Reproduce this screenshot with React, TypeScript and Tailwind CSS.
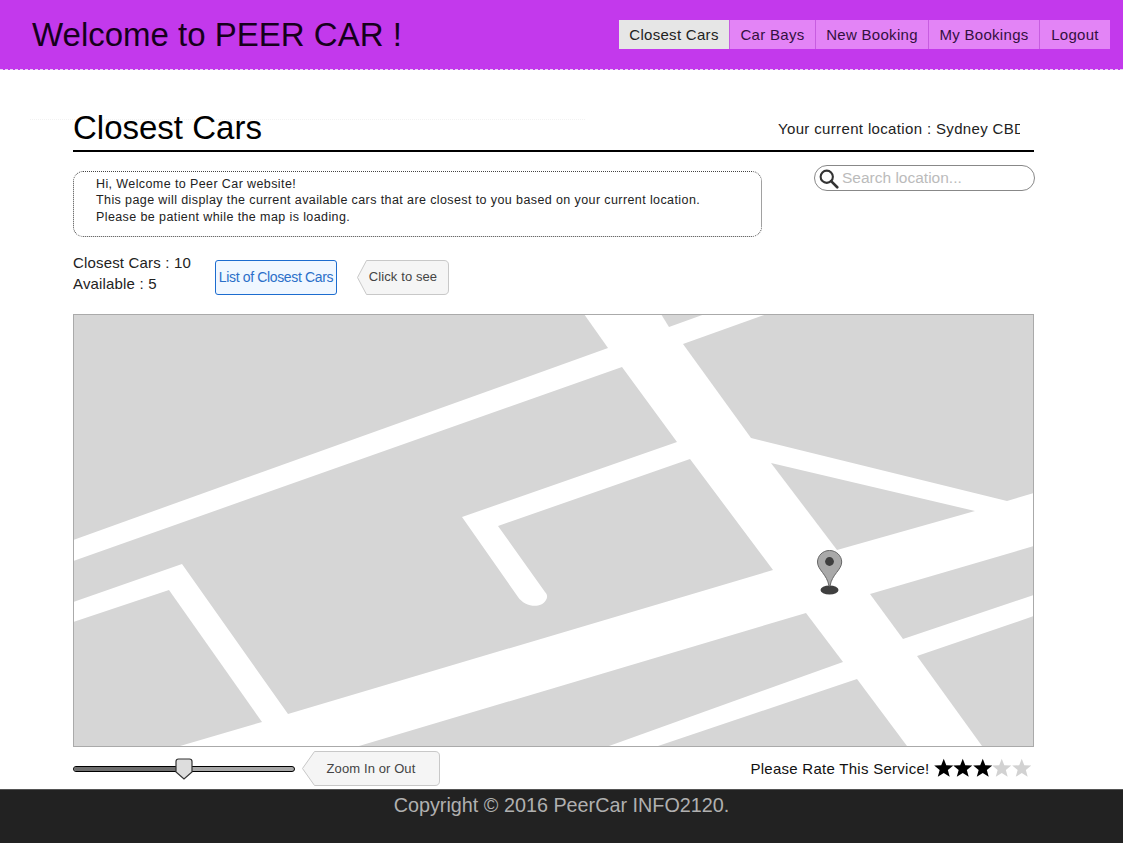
import React from "react";

const blocks = [
  "73,314 584,314 608,348 73,540",
  "661,314 705,314 669,327",
  "767,314 1034,314 1034,493 1007,501 751,438 683,344",
  "771,463 975,511 837,550",
  "73,622 169,590 262,722 180,746 73,746",
  "359,746 806,613 843,662 609,746",
  "658,746 857,679 907,746",
  "870,594 1034,546 1034,595 903,639",
  "917,656 1034,616 1034,746 982,746",
];

function MapDrawing() {
  return (
    <svg viewBox="74 315 959 431" className="block w-full h-full" preserveAspectRatio="none">
      <rect x="73" y="314" width="961" height="432" fill="#ffffff" />
      {blocks.map((p) => (
        <polygon key={p} points={p} fill="#d6d6d6" />
      ))}
      <path
        d="M73 561 L622 367 L677 442 L462 517 L518 597 C524 606 540 610 546 600 C548 597 547 594 545 592 L498 526 L690 459 L773 570 L288 714 L182 564 L73 602 Z"
        fill="#d6d6d6"
      />
      <ellipse cx="829.5" cy="590" rx="9" ry="4.5" fill="#3f3f3f" />
      <path
        d="M829.5 550.5 C822.5 550.5 817.5 556 817.5 562 C817.5 570 827 574 829 586 L830 586 C832 574 841.7 570 841.7 562 C841.7 556 836.5 550.5 829.5 550.5 Z"
        fill="#a9a9a9"
        stroke="#666"
        strokeWidth="1"
      />
      <circle cx="829.5" cy="561.5" r="4.4" fill="#3f3f3f" />
    </svg>
  );
}

function Callout({ w, h, point, text, className }: { w: number; h: number; point: number; text: string; className: string }) {
  return (
    <div className={`relative flex items-center justify-center ${className}`}>
      <svg viewBox={`0 0 ${w} ${h}`} className="absolute inset-0 w-full h-full">
        <path
          d={`M${point + 0.5} 0.5 L${w - 5} 0.5 Q${w - 0.5} 0.5 ${w - 0.5} 5 L${w - 0.5} ${h - 5} Q${w - 0.5} ${h - 0.5} ${w - 5} ${h - 0.5} L${point + 0.5} ${h - 0.5} L0.5 ${h / 2} Z`}
          fill="#f5f5f5"
          stroke="#c8c8c8"
        />
      </svg>
      <span className="relative">{text}</span>
    </div>
  );
}

function Star({ filled }: { filled: boolean }) {
  return (
    <svg viewBox="0 0 20 20" className="w-[19.5px] h-5 block">
      <polygon
        points="10,0.5 12.6,7.2 19.8,7.5 14.2,12 16.1,19 10,15.1 3.9,19 5.8,12 0.2,7.5 7.4,7.2"
        fill={filled ? "#000000" : "#d2d2d2"}
      />
    </svg>
  );
}

const navItems = ["Closest Cars", "Car Bays", "New Booking", "My Bookings", "Logout"];
const navWidths = ["w-[110px]", "w-[86px]", "w-[113px]", "w-[111px]", "w-[71px]"];

export default function App() {
  return (
    <div className="w-[1123px] h-[843px] flex flex-col bg-white overflow-hidden font-['Liberation_Sans',Arial,sans-serif] text-[#222]">
      <header className="h-[70px] shrink-0 bg-[#c339ec] border-b border-dashed border-[#e9d0f5] flex items-center justify-between pl-8 pr-[13px]">
        <h1 className="text-[33px] leading-none text-[#16001c]">Welcome to PEER CAR !</h1>
        <nav className="flex h-[29px]">
          {navItems.map((item, i) => (
            <a
              key={item}
              className={`${navWidths[i]} h-full pt-[1px] flex items-center justify-center text-[15px] tracking-[0.3px] ${
                i === 0 ? "bg-[#e6e6e6] text-[#222]" : "bg-[#e384f6] text-[#33103f] border-l border-[#c75de0]"
              }`}
            >
              {item}
            </a>
          ))}
        </nav>
      </header>

      <main className="flex-1 ml-[73px] w-[961px] flex flex-col">
        <div className="h-[82px] shrink-0 border-b-2 border-black flex items-end justify-between relative">
          <div className="absolute -left-[43px] top-[49px] w-[555px] border-t border-dotted border-[#f2f2f2]"></div>
          <h2 className="relative text-[33px] leading-none text-black mb-[6px]">Closest Cars</h2>
          <div className="w-[242px] mr-[14px] mb-[12px] overflow-hidden whitespace-nowrap text-[15px] leading-[18px] tracking-[0.35px] text-[#222]">
            Your current location : Sydney CBD
          </div>
        </div>

        <div className="flex justify-between h-[101px] shrink-0">
          <div className="mt-[19px] w-[689px] h-[66px] border border-dotted border-[#444] rounded-[10px] pl-[22px] pt-[3.5px] text-[12.5px] leading-[16.5px] tracking-[0.4px] text-[#222]">
            <div>Hi, Welcome to Peer Car website!</div>
            <div>This page will display the current available cars that are closest to you based on your current location.</div>
            <div>Please be patient while the map is loading.</div>
          </div>
          <div className="mt-[13px] w-[221px] h-[26px] border border-[#888] rounded-full flex items-center pl-[3px] mr-[-1px]">
            <svg viewBox="0 0 24 24" className="w-[21px] h-[21px] shrink-0" fill="none" stroke="#333" strokeWidth="2.4">
              <circle cx="10" cy="10" r="7" />
              <path d="M15 15 L22 22" strokeLinecap="round" strokeWidth="3" />
            </svg>
            <span className="ml-[3px] text-[15.5px] text-[#bbbbbb]">Search location...</span>
          </div>
        </div>

        <div className="flex h-[61px] shrink-0">
          <div className="w-[142px] -mt-[1px] h-[42px] text-[15px] leading-[21px] tracking-[0.17px] text-[#222]">
            <div>Closest Cars : 10</div>
            <div>Available : 5</div>
          </div>
          <div className="mt-[7px] w-[122px] h-[35px] border border-[#1c6ccf] rounded-[3px] bg-[#f0f7ff] flex items-center justify-center text-[14px] tracking-[-0.35px] text-[#2a6fc9]">
            List of Closest Cars
          </div>
          <Callout w={92} h={35} point={9} text="Click to see" className="ml-[20px] mt-[7px] w-[92px] h-[35px] text-[13px] tracking-[0.1px] text-[#444] pb-[2px]" />
        </div>

        <div className="w-[961px] h-[433px] shrink-0 border border-[#aaaaaa]">
          <MapDrawing />
        </div>

        <div className="flex-1 flex items-center justify-between">
          <div className="flex items-center">
            <div className="relative w-[222px] h-[6px] rounded-full border border-black bg-[#a8a8a8] mt-[2px]">
              <div className="w-[103px] h-full rounded-l-full bg-[#6e6e6e]"></div>
              <svg viewBox="0 0 18 22" className="absolute left-[101px] -top-[9px] w-[18px] h-[22px]">
                <path d="M3.5 1 L14.5 1 Q17 1 17 3.5 L17 14 L9 21 L1 14 L1 3.5 Q1 1 3.5 1 Z" fill="#dddddd" stroke="#333" strokeWidth="1.2" />
              </svg>
            </div>
            <Callout w={138} h={35} point={12} text="Zoom In or Out" className="ml-[7px] w-[138px] h-[35px] pt-[1px] text-[13px] tracking-[0.1px] text-[#444]" />
          </div>
          <div className="flex items-center mr-[3px]">
            <span className="text-[15px] tracking-[0.27px] text-[#111] mr-[4px] mt-[2px]">Please Rate This Service!</span>
            <div className="flex">
              {[true, true, true, false, false].map((f, i) => (
                <Star key={i} filled={f} />
              ))}
            </div>
          </div>
        </div>
      </main>

      <footer className="h-[54px] shrink-0 bg-[#222222] border-t border-[#555] text-center text-[19.8px] leading-[30px] text-[#b0b0b0]">
        Copyright © 2016 PeerCar INFO2120.
      </footer>
    </div>
  );
}
